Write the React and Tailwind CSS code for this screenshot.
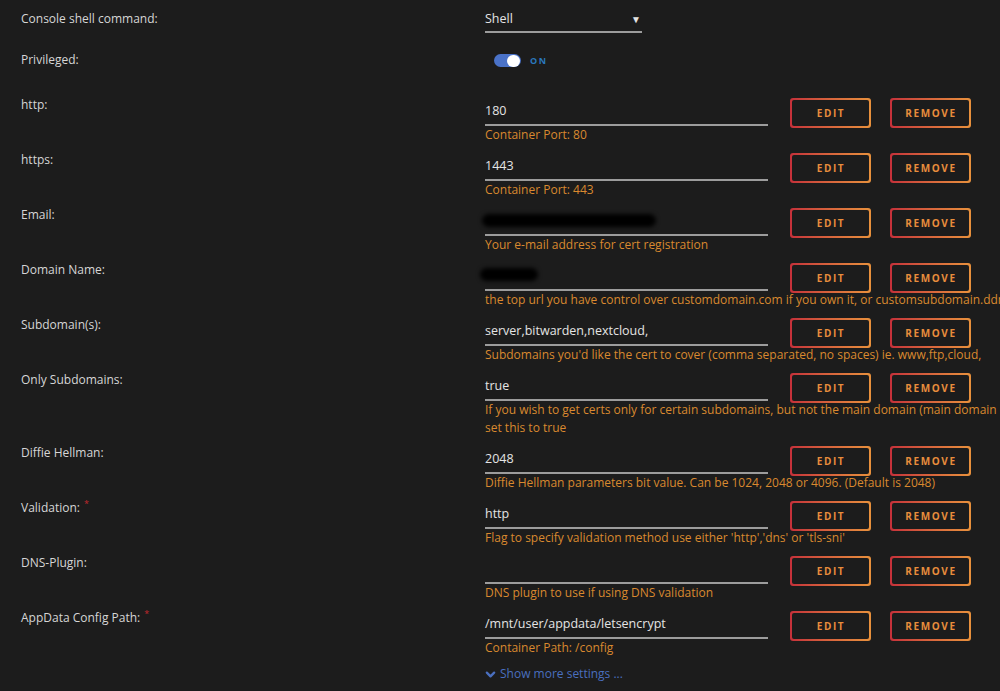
import React from 'react';

const font = { fontFamily: '"Open Sans", "Liberation Sans", sans-serif' };

const Required = () => <span className="ml-[4px] align-top text-[9px] leading-none text-[#c0282d]">*</span>;

const OutlineButton = ({ children }) => (
  <div className="h-[30px] w-[81px] shrink-0 rounded-[3px] bg-linear-to-r from-[#c5303a] to-[#e8913c] p-[2px]">
    <div className="flex h-full w-full items-center justify-center rounded-[2px] bg-[#1c1c1c] pl-[1px] text-[10px] font-bold tracking-[1.6px] text-[#e88d3c]">
      {children}
    </div>
  </div>
);

const Blur = ({ w }) => (
  <div className={`h-[13px] ${w} rounded-full bg-black blur-[2px]`} />
);

const FieldRow = ({ label, required, value, blur, help }) => (
  <div className="flex items-start pb-[7px]">
    <div className="w-[464px] shrink-0 text-[12px] leading-[18px] text-[#d6d6d6]">
      {label}:{required && <Required />}
    </div>
    <div className="mt-[2px] flex flex-col">
      <div className="flex h-[28px] items-start">
        <div className="flex h-[28px] w-[283px] shrink-0 items-center border-b-2 border-[#9c9c9c] text-[12.5px] text-[#e4e4e4]">
          {blur ? blur : value}
        </div>
        <div className="ml-[22px] flex gap-[19px]">
          <OutlineButton>EDIT</OutlineButton>
          <OutlineButton>REMOVE</OutlineButton>
        </div>
      </div>
      <div className="whitespace-nowrap text-[12px] leading-[18px] text-[#d9892f]">
        {help.map((line, i) => (
          <div key={i}>{line}</div>
        ))}
      </div>
    </div>
  </div>
);

const fields = [
  { label: 'http', value: '180', help: ['Container Port: 80'] },
  { label: 'https', value: '1443', help: ['Container Port: 443'] },
  { label: 'Email', blur: <div className="-ml-[3px] mb-[2px]"><Blur w="w-[174px]" /></div>, help: ['Your e-mail address for cert registration'] },
  { label: 'Domain Name', blur: <div className="-ml-[5px] mb-[4px]"><Blur w="w-[58px]" /></div>, help: ["the top url you have control over customdomain.com if you own it, or customsubdomain.ddnsprovider.com if you don't own a domain"] },
  { label: 'Subdomain(s)', value: 'server,bitwarden,nextcloud,', help: ["Subdomains you'd like the cert to cover (comma separated, no spaces) ie. www,ftp,cloud,"] },
  {
    label: 'Only Subdomains',
    value: 'true',
    help: [
      'If you wish to get certs only for certain subdomains, but not the main domain (main domain may be hosted on another machine and cannot be validated),',
      'set this to true',
    ],
  },
  { label: 'Diffie Hellman', value: '2048', help: ['Diffie Hellman parameters bit value. Can be 1024, 2048 or 4096. (Default is 2048)'] },
  { label: 'Validation', required: true, value: 'http', help: ["Flag to specify validation method use either 'http','dns' or 'tls-sni'"] },
  { label: 'DNS-Plugin', value: '', help: ['DNS plugin to use if using DNS validation'] },
  { label: 'AppData Config Path', required: true, value: '/mnt/user/appdata/letsencrypt', help: ['Container Path: /config'] },
];

export default function App() {
  return (
    <div className="h-[691px] w-[1000px] overflow-hidden bg-[#1c1c1c] pl-[21px] pt-[10px]" style={font}>
      {/* Console shell */}
      <div className="flex h-[41px] items-start">
        <div className="w-[464px] shrink-0 text-[12px] leading-[18px] text-[#d6d6d6]">Console shell command:</div>
        <div className="-mt-[3px] flex h-[26px] w-[157px] items-center justify-between border-b-2 border-[#9c9c9c] pr-[1px] text-[12.5px] text-[#e4e4e4]">
          <span>Shell</span>
          <span className="text-[10px] text-[#e4e4e4]">▼</span>
        </div>
      </div>

      {/* Privileged */}
      <div className="flex h-[45px] items-start">
        <div className="w-[464px] shrink-0 text-[12px] leading-[18px] text-[#d6d6d6]">Privileged:</div>
        <div className="mt-[3px] flex items-center pl-[9px]">
          <div className="flex h-[13px] w-[27px] items-center justify-end rounded-full bg-[#4a72c8] p-[1px]">
            <div className="h-[12px] w-[13px] rounded-full bg-white" />
          </div>
          <span className="ml-[9px] text-[9px] font-bold tracking-[1.5px] text-[#2a78bd]">ON</span>
        </div>
      </div>

      {fields.map((f) => (
        <FieldRow key={f.label} {...f} />
      ))}

      <div className="mt-[1px] flex items-center pl-[464px] text-[12px] text-[#4a6fbf]">
        <svg width="11" height="11" viewBox="0 0 24 24" className="mr-[4px]" fill="none" stroke="#4a6fbf" strokeWidth="5" strokeLinecap="round" strokeLinejoin="round">
          <path d="M4 8l8 8 8-8" />
        </svg>
        Show more settings ...
      </div>
    </div>
  );
}
